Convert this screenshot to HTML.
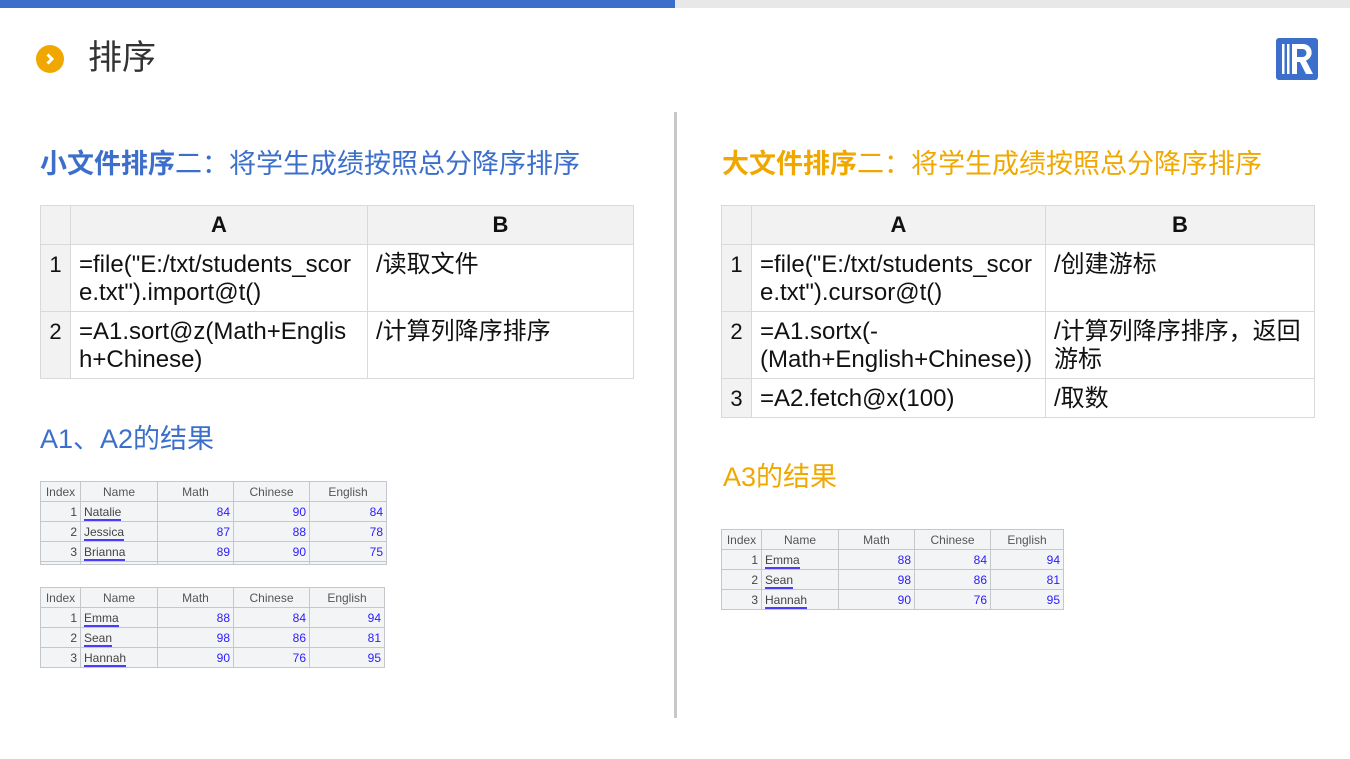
<!DOCTYPE html>
<html><head><meta charset="utf-8"><style>
*{margin:0;padding:0;box-sizing:border-box}
body{width:1350px;height:759px;background:#fff;position:relative;overflow:hidden;font-family:"Liberation Sans","Noto Sans CJK SC",sans-serif}
.a{position:absolute}
table{border-collapse:collapse;position:absolute;table-layout:fixed}
.ct td{border:1px solid #d9d9d9;font-size:24px;color:#111;vertical-align:top;padding:6px 8px 0 8px;line-height:28px}
.ct tr.h td{background:#f2f2f2;font-weight:bold;text-align:center;vertical-align:middle;padding:0;font-size:22px}
.ct td.n{background:#f2f2f2;text-align:center;padding:6px 0 0 0;font-size:22px}
.st td{border:1px solid #c4c8cc;background:#f3f4f5;font-size:12px;font-family:"Liberation Sans",sans-serif;height:20px;padding:0 3px;color:#333;white-space:nowrap;overflow:hidden}
.st tr.h td{text-align:center;color:#555}
.st td.r{text-align:right;color:#2a1cff}
.st td.i{text-align:right;color:#444}
.st td.nm span{color:#444;border-bottom:2px solid #4a3cff;padding-bottom:0}
.t{font-size:27px;line-height:34px}
</style></head><body>
<div class="a" style="left:0;top:0;width:675px;height:8px;background:#3c6fcb"></div>
<div class="a" style="left:675px;top:0;width:675px;height:8px;background:#e8e8e8"></div>
<svg class="a" style="left:36px;top:45px" width="28" height="28" viewBox="0 0 28 28"><circle cx="14" cy="14" r="14" fill="#f0a800"/><path d="M11.5 9.5l4.5 4.5-4.5 4.5" stroke="#fff" stroke-width="3" fill="none"/></svg>
<div class="a" style="left:88px;top:36px;font-size:34px;color:#333;line-height:44px">排序</div>
<svg class="a" style="left:1276px;top:38px" width="42" height="42" viewBox="0 0 42 42"><rect width="42" height="42" rx="3" fill="#3c6fcb"/><rect x="6" y="6" width="2.5" height="30" fill="#fff"/><rect x="11" y="6" width="2.5" height="30" fill="#fff"/><path d="M16 6h11a8.5 8.5 0 0 1 3 16.5L37 36h-7l-6-12h-3v12h-5z M21 11v8h5.5a4 4 0 0 0 0-8z" fill="#fff" fill-rule="evenodd"/></svg>
<div class="a" style="left:674px;top:112px;width:3px;height:606px;background:#c8c8c8"></div>

<div class="a t" style="left:40px;top:147px;color:#3c6fcb"><b>小文件排序</b>二：将学生成绩按照总分降序排序</div>
<table class="ct" style="left:40px;top:205px;width:593px">
<col style="width:30px"><col style="width:297px"><col style="width:266px">
<tr class="h" style="height:39px"><td></td><td>A</td><td>B</td></tr>
<tr style="height:67px"><td class="n">1</td><td>=file("E:/txt/students_scor e.txt").import@t()</td><td>/读取文件</td></tr>
<tr style="height:67px"><td class="n">2</td><td>=A1.sort@z(Math+Englis h+Chinese)</td><td>/计算列降序排序</td></tr>
</table>
<div class="a t" style="left:40px;top:422px;color:#3c6fcb">A1、A2的结果</div>

<table class="st" style="left:40px;top:481px;width:346px">
<col style="width:40px"><col style="width:77px"><col style="width:76px"><col style="width:76px"><col style="width:77px">
<tr class="h"><td>Index</td><td>Name</td><td>Math</td><td>Chinese</td><td>English</td></tr>
<tr><td class="i">1</td><td class="nm"><span>Natalie</span></td><td class="r">84</td><td class="r">90</td><td class="r">84</td></tr>
<tr><td class="i">2</td><td class="nm"><span>Jessica</span></td><td class="r">87</td><td class="r">88</td><td class="r">78</td></tr>
<tr><td class="i">3</td><td class="nm"><span>Brianna</span></td><td class="r">89</td><td class="r">90</td><td class="r">75</td></tr>
<tr style="height:3px"><td style="height:3px"></td><td style="height:3px"></td><td style="height:3px"></td><td style="height:3px"></td><td style="height:3px"></td></tr>
</table>
<table class="st" style="left:40px;top:587px;width:344px">
<col style="width:40px"><col style="width:77px"><col style="width:76px"><col style="width:76px"><col style="width:75px">
<tr class="h"><td>Index</td><td>Name</td><td>Math</td><td>Chinese</td><td>English</td></tr>
<tr><td class="i">1</td><td class="nm"><span>Emma</span></td><td class="r">88</td><td class="r">84</td><td class="r">94</td></tr>
<tr><td class="i">2</td><td class="nm"><span>Sean</span></td><td class="r">98</td><td class="r">86</td><td class="r">81</td></tr>
<tr><td class="i">3</td><td class="nm"><span>Hannah</span></td><td class="r">90</td><td class="r">76</td><td class="r">95</td></tr>
</table>

<div class="a t" style="left:722px;top:147px;color:#f0a800"><b>大文件排序</b>二：将学生成绩按照总分降序排序</div>
<table class="ct" style="left:721px;top:205px;width:593px">
<col style="width:30px"><col style="width:294px"><col style="width:269px">
<tr class="h" style="height:39px"><td></td><td>A</td><td>B</td></tr>
<tr style="height:67px"><td class="n">1</td><td>=file("E:/txt/students_scor e.txt").cursor@t()</td><td>/创建游标</td></tr>
<tr style="height:67px"><td class="n">2</td><td>=A1.sortx(- (Math+English+Chinese))</td><td>/计算列降序排序，返回游标</td></tr>
<tr style="height:39px"><td class="n">3</td><td>=A2.fetch@x(100)</td><td>/取数</td></tr>
</table>
<div class="a t" style="left:723px;top:460px;color:#f0a800">A3的结果</div>
<table class="st" style="left:721px;top:529px;width:342px">
<col style="width:40px"><col style="width:77px"><col style="width:76px"><col style="width:76px"><col style="width:73px">
<tr class="h"><td>Index</td><td>Name</td><td>Math</td><td>Chinese</td><td>English</td></tr>
<tr><td class="i">1</td><td class="nm"><span>Emma</span></td><td class="r">88</td><td class="r">84</td><td class="r">94</td></tr>
<tr><td class="i">2</td><td class="nm"><span>Sean</span></td><td class="r">98</td><td class="r">86</td><td class="r">81</td></tr>
<tr><td class="i">3</td><td class="nm"><span>Hannah</span></td><td class="r">90</td><td class="r">76</td><td class="r">95</td></tr>
</table>
</body></html>
